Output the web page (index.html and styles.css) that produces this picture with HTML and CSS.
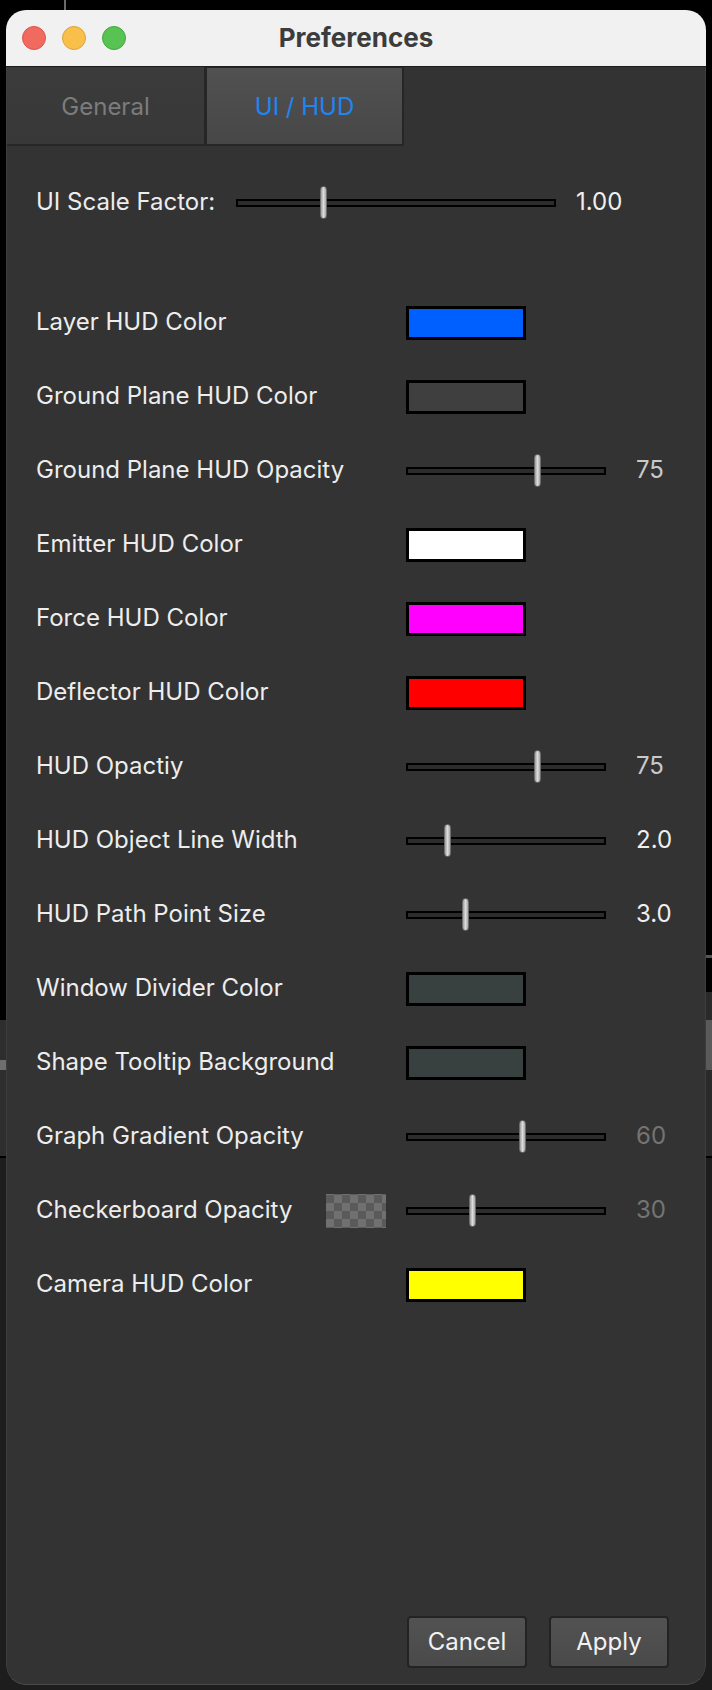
FILE: index.html
```html
<!DOCTYPE html>
<html>
<head>
<meta charset="utf-8">
<title>Preferences</title>
<link rel="stylesheet" href="styles.css">
</head>
<body>
<div class="desktop">
  <div class="top-strip"><span class="bg-line"></span></div>
  <div class="window">
    <div class="titlebar">
      <div class="lights">
        <span class="light red"></span>
        <span class="light yellow"></span>
        <span class="light green"></span>
      </div>
      <div class="title">Preferences</div>
      <div></div>
    </div>
    <div class="tabs">
      <div class="tab">General</div>
      <div class="tab active">UI / HUD</div>
    </div>
    <div class="content">
      <div class="scale-row">
        <span class="label">UI Scale Factor:</span>
        <div class="slider wide"><span class="handle" style="left:82px"></span></div>
        <span class="value bright">1.00</span>
      </div>

      <div class="list">
        <div class="row">
          <span class="label">Layer HUD Color</span>
          <span class="swatch" style="background:#005fff"></span>
        </div>
        <div class="row">
          <span class="label">Ground Plane HUD Color</span>
          <span class="swatch" style="background:#3f3f3f"></span>
        </div>
        <div class="row">
          <span class="label">Ground Plane HUD Opacity</span>
          <div class="slider"><span class="handle" style="left:126px"></span></div>
          <span class="value">75</span>
        </div>
        <div class="row">
          <span class="label">Emitter HUD Color</span>
          <span class="swatch" style="background:#ffffff"></span>
        </div>
        <div class="row">
          <span class="label">Force HUD Color</span>
          <span class="swatch" style="background:#ff00ff"></span>
        </div>
        <div class="row">
          <span class="label">Deflector HUD Color</span>
          <span class="swatch" style="background:#ff0000"></span>
        </div>
        <div class="row">
          <span class="label">HUD Opactiy</span>
          <div class="slider"><span class="handle" style="left:126px"></span></div>
          <span class="value">75</span>
        </div>
        <div class="row">
          <span class="label">HUD Object Line Width</span>
          <div class="slider"><span class="handle" style="left:36px"></span></div>
          <span class="value bright">2.0</span>
        </div>
        <div class="row">
          <span class="label">HUD Path Point Size</span>
          <div class="slider"><span class="handle" style="left:54px"></span></div>
          <span class="value bright">3.0</span>
        </div>
        <div class="row">
          <span class="label">Window Divider Color</span>
          <span class="swatch" style="background:#384040"></span>
        </div>
        <div class="row">
          <span class="label">Shape Tooltip Background</span>
          <span class="swatch" style="background:#384040"></span>
        </div>
        <div class="row">
          <span class="label">Graph Gradient Opacity</span>
          <div class="slider"><span class="handle" style="left:111px"></span></div>
          <span class="value dim">60</span>
        </div>
        <div class="row">
          <span class="label">Checkerboard Opacity</span>
          <span class="checker"></span>
          <div class="slider"><span class="handle" style="left:61px"></span></div>
          <span class="value dim">30</span>
        </div>
        <div class="row">
          <span class="label">Camera HUD Color</span>
          <span class="swatch" style="background:#ffff00"></span>
        </div>
      </div>

      <div class="buttons">
        <button class="btn">Cancel</button>
        <button class="btn">Apply</button>
      </div>
    </div>
  </div>
</div>
</body>
</html>
```

FILE: styles.css
```css
* { box-sizing: border-box; }

html, body {
  margin: 0;
  padding: 0;
}

body {
  width: 712px;
  height: 1690px;
  overflow: hidden;
  background:
    linear-gradient(to bottom,
      #000 0, #000 955px, #555 955px, #555 958px, #000 958px, #000 992px,
      #2a2a2a 992px, #2a2a2a 1020px, #5a5a5a 1020px, #5a5a5a 1070px,
      #2a2a2a 1070px, #2a2a2a 1156px, #000 1156px, #000 1158px,
      #1d1d1d 1158px, #1d1d1d 100%) right top / 6px 100% no-repeat,
    linear-gradient(to bottom,
      #000 0, #000 1020px, #2e2e2e 1020px, #2e2e2e 1060px,
      #6e6e6e 1060px, #6e6e6e 1070px, #2e2e2e 1070px, #2e2e2e 1156px,
      #000 1156px, #000 1158px, #1d1d1d 1158px, #1d1d1d 100%);
  font-family: Inter, "Noto Sans", "Liberation Sans", sans-serif;
}

.desktop {
  display: flex;
  flex-direction: column;
  width: 712px;
  height: 1690px;
}

.top-strip {
  height: 10px;
  display: flex;
}

.bg-line {
  width: 2px;
  height: 10px;
  margin-left: 64px;
  background: #6a6a6a;
}

.window {
  margin-left: 6px;
  width: 700px;
  height: 1675px;
  display: flex;
  flex-direction: column;
  border-radius: 20px;
  overflow: hidden;
}

/* title bar */
.titlebar {
  height: 57px;
  flex: none;
  display: grid;
  grid-template-columns: 1fr auto 1fr;
  align-items: center;
  background: #f0f1f0;
  border-bottom: 1px solid #1d1d1d;
}

.lights {
  display: flex;
  gap: 16px;
  padding-left: 16px;
  padding-bottom: 1px;
}

.light {
  width: 24px;
  height: 24px;
  border-radius: 50%;
}
.light.red { background: #f06a5f; border: 1px solid #dd5548; }
.light.yellow { background: #f9bf4b; border: 1px solid #dea33a; }
.light.green { background: #58c352; border: 1px solid #43a83e; }

.title {
  font-weight: 700;
  font-size: 26px;
  color: #3c3c3c;
  padding-bottom: 2px;
}

/* content area */
.tabs, .content {
  background: #333333;
  border-left: 1px solid #3e3e3e;
  border-right: 1px solid #3e3e3e;
}

.tabs {
  flex: none;
  height: 79px;
  display: flex;
  align-items: stretch;
}

.tab {
  width: 199px;
  height: 79px;
  display: flex;
  align-items: center;
  justify-content: center;
  font-size: 24px;
  color: #7c7c7c;
  background: linear-gradient(to bottom, #3b3b3b, #383838);
  border-right: 2px solid #262626;
  border-bottom: 2px solid #262626;
  padding-top: 1px;
}

.tab.active {
  width: 198px;
  color: #1f86f0;
  background: linear-gradient(to bottom, #515151, #474747);
  border: 2px solid #262626;
  border-left: 1px solid #262626;
  border-top: 1px solid #262626;
}

.content {
  flex: 1;
  display: flex;
  flex-direction: column;
  padding: 40px 0 0 29px;
  border-bottom: 1px solid #4a4a4a;
  border-radius: 0 0 20px 20px;
}

.label {
  font-size: 24px;
  line-height: 30px;
  color: #ededed;
  white-space: nowrap;
  padding-bottom: 3px;
}

.scale-row {
  height: 34px;
  display: grid;
  grid-template-columns: 200px 340px auto;
  align-items: center;
}

.list {
  margin-top: 66px;
  display: flex;
  flex-direction: column;
}

.row {
  height: 74px;
  display: grid;
  grid-template-columns: 290px 80px 230px auto;
  align-items: center;
}

.row .label { grid-column: 1; }
.row .checker { grid-column: 2; }
.row .swatch, .row .slider { grid-column: 3; }
.row .value { grid-column: 4; }

.swatch {
  width: 120px;
  height: 34px;
  border: 3px solid #000;
}

.checker {
  width: 60px;
  height: 34px;
  background-color: #5a5a5a;
  background-image: repeating-conic-gradient(#707070 0 25%, #5a5a5a 0 50%);
  background-size: 16px 16px;
  background-position: 0 1px;
}

.slider {
  position: relative;
  width: 200px;
  height: 8px;
  border: 2px solid #000;
  background: #2c2c2c;
}
.slider.wide { width: 320px; }

.handle {
  position: absolute;
  top: -15px;
  width: 7px;
  height: 33px;
  border-radius: 4px;
  border: 1px solid #6e6e6e;
  background: linear-gradient(to right, #9c9c9c, #dcdcdc 50%, #a6a6a6);
}

.value {
  font-size: 24px;
  line-height: 30px;
  color: #c9c9c9;
  padding-bottom: 3px;
}
.value.bright { color: #efefef; }
.value.dim { color: #747474; }

.buttons {
  margin-top: auto;
  margin-bottom: 16px;
  display: flex;
  justify-content: flex-end;
  gap: 22px;
  padding-right: 36px;
}

.btn {
  width: 120px;
  height: 52px;
  font-family: inherit;
  font-size: 24px;
  color: #f2f2f2;
  background: linear-gradient(to bottom, #525252, #4a4a4a);
  border: 2px solid #232323;
  border-radius: 4px;
  padding: 0 0 2px 0;
}
```
